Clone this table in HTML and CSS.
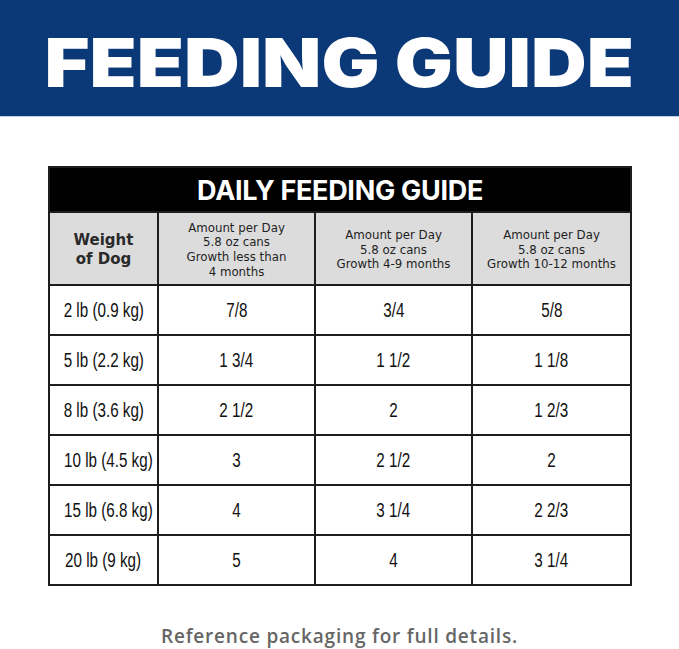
FILE: index.html
```html
<!DOCTYPE html>
<html>
<head>
<meta charset="utf-8">
<link rel="stylesheet" href="styles.css">
</head>
<body>
<header class="banner"><h1 class="banner-title">FEEDING GUIDE</h1></header>
<main class="content">
  <table class="guide">
    <colgroup>
      <col class="c1"><col class="c2"><col class="c3"><col class="c4">
    </colgroup>
    <thead>
      <tr><th class="caption" colspan="4">DAILY FEEDING GUIDE</th></tr>
      <tr class="heads">
        <th class="weight-head">Weight<br>of Dog</th>
        <th>Amount per Day<br>5.8 oz cans<br>Growth less than<br>4 months</th>
        <th>Amount per Day<br>5.8 oz cans<br>Growth 4-9 months</th>
        <th>Amount per Day<br>5.8 oz cans<br>Growth 10-12 months</th>
      </tr>
    </thead>
    <tbody>
      <tr><td><span class="nar">2 lb (0.9 kg)</span></td><td><span class="nar">7/8</span></td><td><span class="nar">3/4</span></td><td><span class="nar">5/8</span></td></tr>
      <tr><td><span class="nar">5 lb (2.2 kg)</span></td><td><span class="nar">1 3/4</span></td><td><span class="nar">1 1/2</span></td><td><span class="nar">1 1/8</span></td></tr>
      <tr><td><span class="nar">8 lb (3.6 kg)</span></td><td><span class="nar">2 1/2</span></td><td><span class="nar">2</span></td><td><span class="nar">1 2/3</span></td></tr>
      <tr><td><span class="nar">10 lb (4.5 kg)</span></td><td><span class="nar">3</span></td><td><span class="nar">2 1/2</span></td><td><span class="nar">2</span></td></tr>
      <tr><td><span class="nar">15 lb (6.8 kg)</span></td><td><span class="nar">4</span></td><td><span class="nar">3 1/4</span></td><td><span class="nar">2 2/3</span></td></tr>
      <tr><td><span class="nar">20 lb (9 kg)</span></td><td><span class="nar">5</span></td><td><span class="nar">4</span></td><td><span class="nar">3 1/4</span></td></tr>
    </tbody>
  </table>
  <p class="note">Reference packaging for full details.</p>
</main>
</body>
</html>
```
FILE: styles.css
```css
html, body {
  margin: 0;
  padding: 0;
  background: #ffffff;
}
body {
  width: 679px;
  height: 649px;
  overflow: hidden;
  font-family: "Liberation Sans", Arial, sans-serif;
}
.banner {
  height: 116px;
  background: #0b3876;
  border-bottom: 1px solid #c3cfe2;
  display: flex;
  align-items: center;
  justify-content: center;
}
.banner-title {
  margin: 0;
  font-family: Inter, "Liberation Sans", sans-serif;
  font-weight: 900;
  font-size: 67px;
  line-height: 1;
  color: #ffffff;
  padding-top: 9px;
  transform: scaleX(1.15);
}
.content {
  padding: 49px 0 0 48px;
}
.guide {
  border-collapse: collapse;
  width: 582px;
  table-layout: fixed;
  border: 2px solid #111;
}
.c1 { width: 109px; }
.c2 { width: 157px; }
.c3 { width: 157px; }
.c4 { width: 159px; }
.guide th, .guide td {
  border: 2px solid #1d1d1d;
  text-align: center;
  padding: 0;
}
.guide .caption {
  background: #000;
  color: #fff;
  height: 41px;
  font-family: Inter, "Liberation Sans", sans-serif;
  font-weight: 700;
  font-size: 27px;
  letter-spacing: -0.3px;
  line-height: 1;
  padding-top: 2px;
}
.heads th {
  background: #dcdcdc;
  height: 68px;
  padding-top: 3px;
  font-family: "DejaVu Sans", sans-serif;
  font-weight: 400;
  font-size: 11.8px;
  line-height: 14.7px;
  color: #1f1f1f;
}
.heads .weight-head {
  font-size: 15px;
  line-height: 19px;
  font-weight: 700;
  color: #2a2a2a;
}
.guide td {
  height: 48px;
  font-family: "Liberation Sans", Arial, sans-serif;
  font-size: 20px;
  color: #111;
}
.nar {
  display: inline-block;
  white-space: nowrap;
  transform: scaleX(0.76);
}
.note {
  margin: 40px 0 0 -48px;
  text-align: center;
  font-family: "Open Sans", sans-serif;
  font-weight: 600;
  font-size: 19px;
  line-height: 20px;
  letter-spacing: 0.8px;
  color: #666666;
}
```
